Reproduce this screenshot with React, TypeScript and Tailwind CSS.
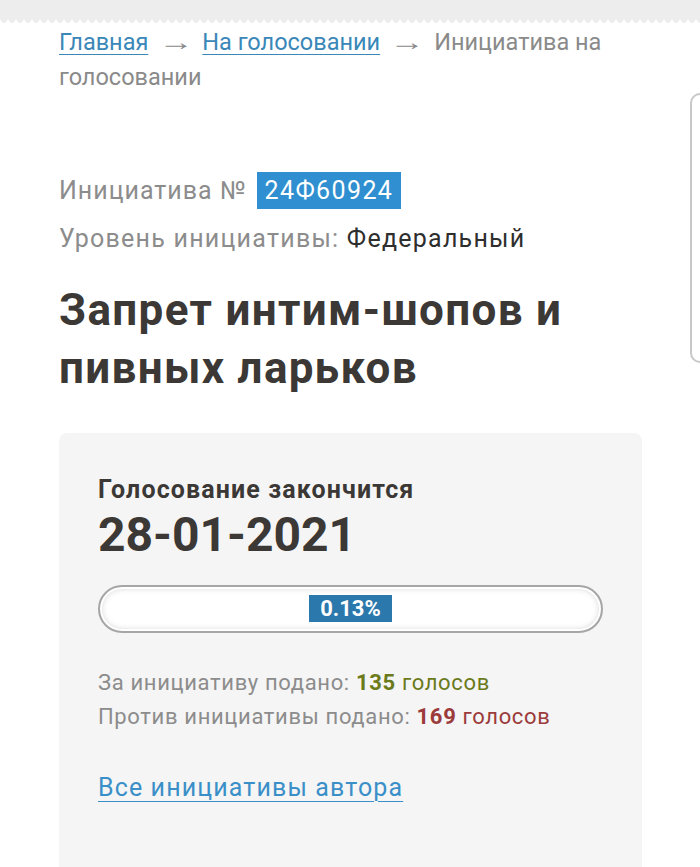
import React from "react";

const font = { fontFamily: "Roboto, 'Noto Sans', sans-serif" };

function Scallops() {
  // зубчатый край серой шапки
  return (
    <svg width="700" height="6" className="block">
      <defs>
        <pattern id="sc" width="8" height="6" patternUnits="userSpaceOnUse">
          <path d="M0 0 H8 V1 Q6 5 4 5 Q2 5 0 1 Z" fill="#ededed" />
        </pattern>
      </defs>
      <rect width="700" height="6" fill="url(#sc)" />
    </svg>
  );
}

function Arrow() {
  return (
    <span className="mx-[14px] inline-block w-[26px] text-center">
      <span className="inline-block scale-x-150">→</span>
    </span>
  );
}

export default function App() {
  return (
    <div className="relative h-[867px] w-[700px] overflow-hidden bg-white" style={font}>
      <div className="h-[18px] bg-[#ededed]" />
      <Scallops />

      {/* боковая вкладка справа */}
      <div className="absolute left-[690px] top-[93px] h-[270px] w-[20px] rounded-l-[10px] border-2 border-[#c8c8c8] bg-white" />

      <div className="px-[59px]">
        <nav className="mt-[1px] text-[23.5px] leading-[35px] text-[#8a8a8a]">
          <a className="text-[#3a87b8] underline decoration-1 underline-offset-[4px]">Главная</a>
          <Arrow />
          <a className="text-[#3a87b8] underline decoration-1 underline-offset-[4px]">На голосовании</a>
          <Arrow />
          <span>Инициатива на голосовании</span>
        </nav>

        <div className="mt-[77px] flex items-center text-[25px] tracking-[0.04em] text-[#8c8c8c]">
          <span>Инициатива №</span>
          <span className="ml-[10px] bg-[#2f8fd0] px-[8px] leading-[37px] tracking-[0.055em] text-white">24Ф60924</span>
        </div>
        <div className="mt-[14px] text-[25px] leading-[30px] tracking-[0.05em] text-[#8c8c8c]">
          Уровень инициативы: <span className="text-[#2e2e2e]">Федеральный</span>
        </div>

        <h1 className="mt-[27px] text-[44px] font-bold leading-[58px] tracking-[0.03em] text-[#3b3836]">
          Запрет интим-шопов и пивных ларьков
        </h1>

        <section className="mt-[36px] h-[460px] w-[583px] rounded-[8px] bg-[#f5f5f5] px-[39px] pt-[42px]">
          <div className="text-[25px] font-bold leading-[30px] tracking-[0.045em] text-[#3b3836]">Голосование закончится</div>
          <div className="mt-[2px] text-[48px] font-bold leading-[56px] text-[#3b3836]">28-01-2021</div>

          <div className="mt-[22px] flex h-[48px] w-[505px] items-center justify-center rounded-full border-2 border-[#a6a6a6] bg-white shadow-[inset_0_0_0_2px_#ffffff,inset_0_0_7px_rgba(0,0,0,0.25)]">
            <span className="bg-[#2b79ac] px-[11px] text-[22px] font-bold leading-[27px] text-white">0.13%</span>
          </div>

          <div className="mt-[33px] text-[22px] leading-[34px] tracking-[0.03em] text-[#8c8c8c]">
            За инициативу подано: <span className="text-[#6b7a1b]"><b>135</b> голосов</span>
          </div>
          <div className="text-[22px] leading-[34px] tracking-[0.03em] text-[#8c8c8c]">
            Против инициативы подано: <span className="text-[#9b3b3b]"><b>169</b> голосов</span>
          </div>

          <a className="mt-[39px] block text-[25px] leading-[30px] tracking-[0.045em] text-[#3a8fc8] underline decoration-1 underline-offset-[5px]">
            Все инициативы автора
          </a>
        </section>
      </div>
    </div>
  );
}
